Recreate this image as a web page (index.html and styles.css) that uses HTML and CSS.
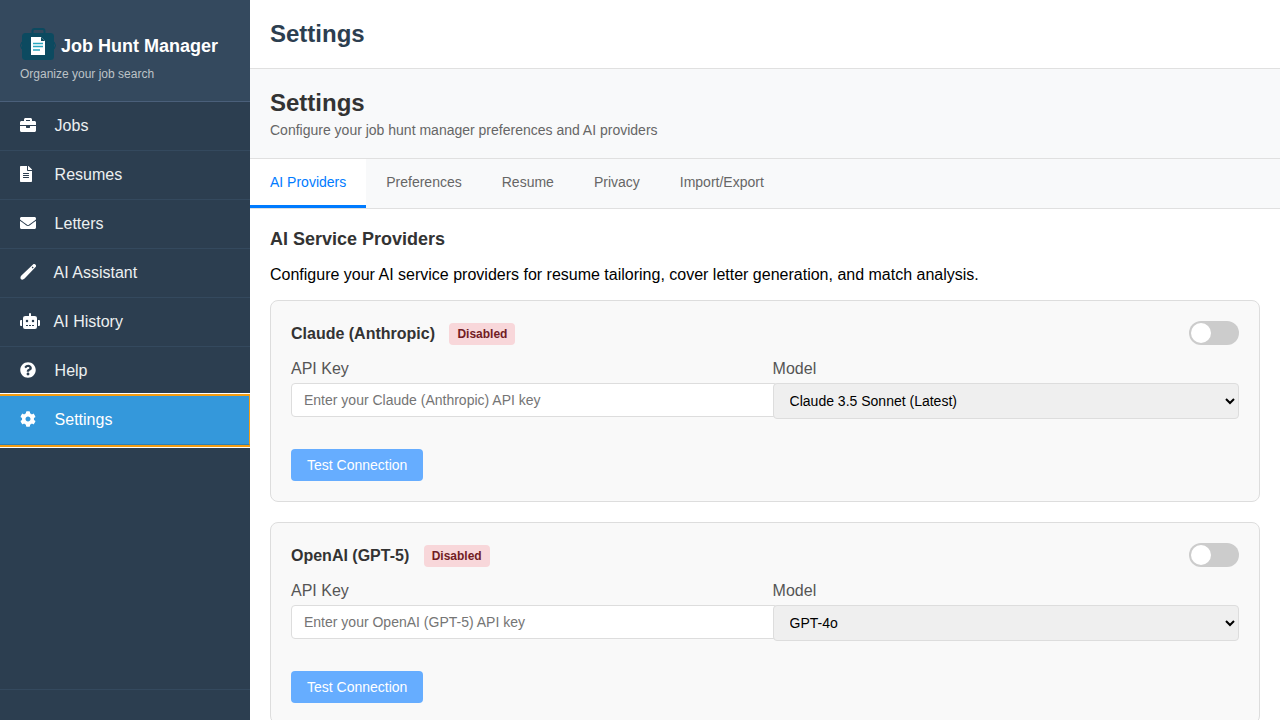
FILE: index.html
```html
<!DOCTYPE html>
<html lang="en">
<head>
<meta charset="utf-8">
<title>Job Hunt Manager - Settings</title>
<link rel="stylesheet" href="styles.css">
</head>
<body>
<div class="app">
  <aside class="sidebar">
    <div class="brand">
      <h1 class="brand-title">
        <svg class="brand-logo" viewBox="0 0 36 36" width="36" height="36">
          <rect x="12.5" y="1" width="12" height="6" rx="2" fill="none" stroke="#0c4a60" stroke-width="2"/>
          <rect x="2" y="5" width="32" height="27" rx="3.5" fill="#0c4a60"/>
          <path d="M2 14 L0.5 17.5 L2 21 M34 14 L35.5 17.5 L34 21" fill="none" stroke="#0c4a60" stroke-width="1.2"/>
          <path d="M11 9 H21 L25 13 V27 H11 Z" fill="#fff"/>
          <path d="M21 9 L25 13 H21 Z" fill="#0c4a60"/>
          <path d="M13 15.5 H23 M13 18.5 H23 M13 22 H20" stroke="#2aa7bf" stroke-width="1.6"/>
        </svg>
        <span>Job Hunt Manager</span>
      </h1>
      <p class="brand-sub">Organize your job search</p>
    </div>
    <nav class="nav">
      <a class="nav-item" href="#"><span class="nav-icon"><svg viewBox="0 0 512 512" width="16" height="16"><path d="M320 336c0 8.84-7.16 16-16 16h-96c-8.84 0-16-7.16-16-16v-48H0v144c0 25.6 22.4 48 48 48h416c25.6 0 48-22.4 48-48V288H320v48zm144-208h-80V80c0-25.6-22.4-48-48-48H176c-25.6 0-48 22.4-48 48v48H48c-25.6 0-48 22.4-48 48v80h512v-80c0-25.6-22.4-48-48-48zm-144 0H192V96h128v32z"/></svg></span>Jobs</a>
      <a class="nav-item" href="#"><span class="nav-icon"><svg viewBox="0 0 384 512" width="12" height="16"><path d="M224 136V0H24C10.7 0 0 10.7 0 24v464c0 13.3 10.7 24 24 24h336c13.3 0 24-10.7 24-24V160H248c-13.2 0-24-10.8-24-24zm64 236c0 6.6-5.4 12-12 12H108c-6.6 0-12-5.4-12-12v-8c0-6.6 5.4-12 12-12h168c6.6 0 12 5.4 12 12v8zm0-64c0 6.6-5.4 12-12 12H108c-6.6 0-12-5.4-12-12v-8c0-6.6 5.4-12 12-12h168c6.6 0 12 5.4 12 12v8zm0-72v8c0 6.6-5.4 12-12 12H108c-6.6 0-12-5.4-12-12v-8c0-6.6 5.4-12 12-12h168c6.6 0 12 5.4 12 12zm96-114.1v6.1H256V0h6.1c6.4 0 12.5 2.5 17 7l97.9 98c4.5 4.5 7 10.6 7 16.9z"/></svg></span>Resumes</a>
      <a class="nav-item" href="#"><span class="nav-icon"><svg viewBox="0 0 512 512" width="16" height="16"><path d="M502.3 190.8c3.9-3.1 9.7-.2 9.7 4.7V400c0 26.5-21.5 48-48 48H48c-26.5 0-48-21.5-48-48V195.6c0-5 5.7-7.8 9.7-4.7 22.4 17.4 52.1 39.5 154.1 113.6 21.1 15.4 56.7 47.8 92.2 47.6 35.7.3 72-32.8 92.3-47.6 102-74.1 131.6-96.3 154-113.7zM256 320c23.2.4 56.6-29.2 73.4-41.4 132.7-96.3 142.8-104.7 173.4-128.7 5.8-4.5 9.2-11.5 9.2-18.9v-19c0-26.5-21.5-48-48-48H48C21.5 64 0 85.5 0 112v19c0 7.4 3.4 14.3 9.2 18.9 30.6 23.9 40.7 32.4 173.4 128.7 16.8 12.2 50.2 41.8 73.4 41.4z"/></svg></span>Letters</a>
      <a class="nav-item nav-item-ai" href="#"><span class="nav-icon"><svg viewBox="0 0 16 16" width="16" height="16"><path d="M13 0.6 C13.8 -0.1 15 0 15.6 0.7 C16.2 1.4 16.2 2.4 15.6 3.1 L4.6 14.6 C3.4 15.8 1.9 16 1 15.2 C0.1 14.3 0.3 12.8 1.4 11.6 Z M12.6 2.6 L11.7 3.5 L12.7 4.4 L13.6 3.5 Z" fill-rule="evenodd"/></svg></span>AI Assistant</a>
      <a class="nav-item nav-item-ai" href="#"><span class="nav-icon"><svg viewBox="0 0 640 512" width="20" height="16"><path d="M32,224H64V416H32A31.96166,31.96166,0,0,1,0,384V256A31.96166,31.96166,0,0,1,32,224Zm512-48V448a64.06328,64.06328,0,0,1-64,64H160a64.06328,64.06328,0,0,1-64-64V176a79.974,79.974,0,0,1,80-80H288V32a32,32,0,0,1,64,0V96H464A79.974,79.974,0,0,1,544,176ZM264,256a40,40,0,1,0-40,40A39.997,39.997,0,0,0,264,256Zm-8,128H192v32h64Zm96,0H288v32h64ZM456,256a40,40,0,1,0-40,40A39.997,39.997,0,0,0,456,256Zm-8,128H384v32h64ZM640,256V384a31.96166,31.96166,0,0,1-32,32H576V224h32A31.96166,31.96166,0,0,1,640,256Z"/></svg></span>AI History</a>
      <a class="nav-item" href="#"><span class="nav-icon"><svg viewBox="0 0 512 512" width="16" height="16"><path d="M504 256c0 136.997-111.043 248-248 248S8 392.997 8 256C8 119.083 119.043 8 256 8s248 111.083 248 248zM262.655 90c-54.497 0-89.255 22.957-116.549 63.758-3.536 5.286-2.353 12.415 2.715 16.258l34.699 26.31c5.205 3.947 12.621 3.008 16.665-2.122 17.864-22.658 30.113-35.797 57.303-35.797 20.429 0 45.698 13.148 45.698 32.958 0 14.976-12.363 22.667-32.534 33.976C247.128 238.528 216 254.941 216 296v4c0 6.627 5.373 12 12 12h56c6.627 0 12-5.373 12-12v-1.333c0-28.462 83.186-29.647 83.186-106.667 0-58.002-60.165-102-116.531-102zM256 338c-25.365 0-46 20.635-46 46 0 25.364 20.635 46 46 46s46-20.636 46-46c0-25.365-20.635-46-46-46z"/></svg></span>Help</a>
      <a class="nav-item active" href="#"><span class="nav-icon"><svg viewBox="0 0 512 512" width="16" height="16"><path d="M487.4 315.7l-42.6-24.6c4.3-23.2 4.3-47 0-70.2l42.6-24.6c4.9-2.8 7.1-8.6 5.5-14-11.1-35.6-30-67.8-54.7-94.6-3.8-4.1-10-5.1-14.8-2.3L380.8 110c-17.9-15.4-38.5-27.3-60.8-35.1V25.8c0-5.6-3.9-10.5-9.4-11.7-36.7-8.2-74.3-7.8-109.2 0-5.5 1.2-9.4 6.1-9.4 11.7V75c-22.2 7.9-42.8 19.8-60.8 35.1L88.7 85.5c-4.9-2.8-11-1.9-14.8 2.3-24.7 26.7-43.6 58.9-54.7 94.6-1.7 5.4.6 11.2 5.5 14L67.3 221c-4.3 23.2-4.3 47 0 70.2l-42.6 24.6c-4.9 2.8-7.1 8.6-5.5 14 11.1 35.6 30 67.8 54.7 94.6 3.8 4.1 10 5.1 14.8 2.3l42.6-24.6c17.9 15.4 38.5 27.3 60.8 35.1v49.2c0 5.6 3.9 10.5 9.4 11.7 36.7 8.2 74.3 7.8 109.2 0 5.5-1.2 9.4-6.1 9.4-11.7v-49.2c22.2-7.9 42.8-19.8 60.8-35.1l42.6 24.6c4.9 2.8 11 1.9 14.8-2.3 24.7-26.7 43.6-58.9 54.7-94.6 1.5-5.5-.7-11.3-5.6-14.1zM256 336c-44.1 0-80-35.9-80-80s35.9-80 80-80 80 35.9 80 80-35.9 80-80 80z"/></svg></span>Settings</a>
    </nav>
    <div class="sidebar-foot"></div>
  </aside>

  <main class="main">
    <header class="topbar"><h2 class="topbar-title">Settings</h2></header>
    <div class="page-head">
      <h1 class="page-title">Settings</h1>
      <p class="page-sub">Configure your job hunt manager preferences and AI providers</p>
    </div>
    <div class="tabs">
      <button class="tab active">AI Providers</button>
      <button class="tab">Preferences</button>
      <button class="tab">Resume</button>
      <button class="tab">Privacy</button>
      <button class="tab">Import/Export</button>
    </div>
    <section class="content">
      <h3 class="section-title">AI Service Providers</h3>
      <p class="section-desc">Configure your AI service providers for resume tailoring, cover letter generation, and match analysis.</p>

      <div class="provider">
        <div class="provider-head">
          <div class="provider-name"><h4>Claude (Anthropic)</h4><span class="badge">Disabled</span></div>
          <span class="switch"><span class="knob"></span></span>
        </div>
        <div class="fields">
          <div class="field">
            <label class="field-label">API Key</label>
            <input class="text-input" type="password" placeholder="Enter your Claude (Anthropic) API key">
          </div>
          <div class="field field-model">
            <label class="field-label">Model</label>
            <select class="model-select"><option>Claude 3.5 Sonnet (Latest)</option></select>
          </div>
        </div>
        <button class="test-btn">Test Connection</button>
      </div>

      <div class="provider">
        <div class="provider-head">
          <div class="provider-name"><h4>OpenAI (GPT-5)</h4><span class="badge">Disabled</span></div>
          <span class="switch"><span class="knob"></span></span>
        </div>
        <div class="fields">
          <div class="field">
            <label class="field-label">API Key</label>
            <input class="text-input" type="password" placeholder="Enter your OpenAI (GPT-5) API key">
          </div>
          <div class="field field-model">
            <label class="field-label">Model</label>
            <select class="model-select"><option>GPT-4o</option></select>
          </div>
        </div>
        <button class="test-btn">Test Connection</button>
      </div>
    </section>
  </main>
</div>
</body>
</html>
```
FILE: styles.css
```css
* { box-sizing: border-box; }
html, body { margin: 0; height: 100%; overflow: hidden; }
body { font-family: "Liberation Sans", Arial, sans-serif; color: #333; background: #fff; }

.app { display: flex; height: 720px; overflow: hidden; }

/* sidebar */
.sidebar { width: 250px; flex-shrink: 0; background: #2c3e50; color: #fff; display: flex; flex-direction: column; overflow: hidden; }
.brand { height: 102px; flex-shrink: 0; padding: 28px 20px 0; background: #34495e; border-bottom: 1px solid #4a5f7a; }
.brand-title { margin: 0; display: flex; align-items: center; gap: 5px; font-size: 18px; line-height: 36px; font-weight: bold; height: 36px; white-space: nowrap; }
.brand-logo { flex-shrink: 0; }
.brand-sub { margin: 3px 0 0; font-size: 12px; line-height: 14px; color: #bdc3c7; }

.nav { flex: 1; }
.nav-item { display: flex; align-items: center; height: 49px; padding: 0 20px; color: #ecf0f1; font-size: 16px; text-decoration: none; border-bottom: 1px solid #34495e; }
.nav-icon { width: 20px; margin-right: 14.6px; margin-top: -2px; display: flex; align-items: center; }
.nav-item-ai .nav-icon { margin-right: 13.6px; }
.nav-icon svg { fill: #fff; display: block; flex-shrink: 0; }
.nav-item.active { background: #3498db; color: #fff; border-bottom: 1px solid #2980b9; border-right: 1px solid #f39c12; box-shadow: 0 0 0 2px #f39c12, 0 0 0 3px #fff; position: relative; }

.sidebar-foot { height: 31px; flex-shrink: 0; border-top: 1px solid #34495e; }

/* main column */
.main { flex: 1; min-width: 0; display: flex; flex-direction: column; }
.topbar { height: 69px; flex-shrink: 0; padding: 0 20px; display: flex; align-items: center; border-bottom: 1px solid #e0e0e0; background: #fff; }
.topbar-title { margin: 0; font-size: 24px; color: #2c3e50; }

.page-head { height: 90px; flex-shrink: 0; padding: 20px 20px 0; background: #f8f9fa; border-bottom: 1px solid #e0e0e0; }
.page-title { margin: 0; font-size: 24px; line-height: 28px; color: #333; }
.page-sub { margin: 5px 0 0; font-size: 14px; line-height: 16px; color: #666; }

.tabs { display: flex; height: 50px; flex-shrink: 0; background: #f8f9fa; border-bottom: 1px solid #e0e0e0; }
.tab { height: 49px; padding: 0 20px; border: 0; border-bottom: 3px solid transparent; background: none; font: 14px "Liberation Sans", Arial, sans-serif; color: #666; }
.tab.active { background: #fff; color: #007bff; border-bottom-color: #007bff; }

.content { padding: 20px; flex: 1; }
.section-title { margin: 0 0 15px; font-size: 18px; line-height: 21px; color: #333; }
.section-desc { margin: 0 0 16px; padding-top: 1px; font-size: 16px; line-height: 18px; color: #000; }

.provider { height: 202px; margin-bottom: 20px; padding: 20px; background: #f9f9f9; border: 1px solid #ddd; border-radius: 8px; }
.provider-head { display: flex; justify-content: space-between; align-items: center; height: 24px; margin-bottom: 15px; }
.provider-name { display: flex; align-items: center; gap: 14.4px; padding-top: 2px; }
.provider-name h4 { margin: 0; font-size: 16px; line-height: 24px; color: #333; }
.badge { padding: 4px 8px; font-size: 12px; line-height: 14px; font-weight: bold; color: #721c24; background: #f8d7da; border-radius: 4px; }

.switch { width: 50px; height: 24px; position: relative; background: #ccc; border-radius: 24px; display: block; }
.knob { position: absolute; left: 2px; top: 2px; width: 20px; height: 20px; background: #fff; border-radius: 50%; }

.fields { display: flex; }
.field { flex: 1; min-width: 0; }
.field-model { flex: 0 0 466.4px; margin-left: -1px; }
.field-label { display: block; margin-bottom: 5px; font-size: 16px; line-height: 18px; color: #555; }
.text-input { display: block; width: calc(100% + 4px); height: 34px; padding: 0 12px; font: 14px "Liberation Sans", Arial, sans-serif; background: #fff; border: 1px solid #ddd; border-radius: 4px; }
.text-input::placeholder { color: #757575; }
.model-select { display: block; width: 100%; height: 36px; padding: 0 12px; font: 14px "Liberation Sans", Arial, sans-serif; color: #000; background-color: #efefef; border: 1px solid #ddd; border-radius: 4px; position: relative; }

.test-btn { display: block; margin-top: 30px; height: 32px; padding: 0 16px; font: 14px "Liberation Sans", Arial, sans-serif; color: #fff; background: #66adff; border: 0; border-radius: 4px; }
```
